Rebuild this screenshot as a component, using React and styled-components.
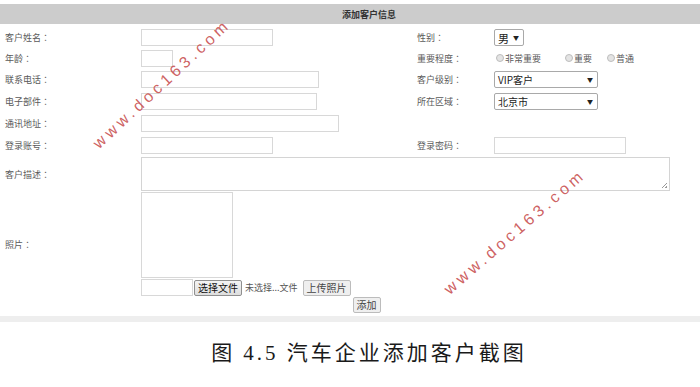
import React from 'react'
import styled, { createGlobalStyle } from 'styled-components'

const GlobalStyle = createGlobalStyle`
  body {
    margin: 0;
    background: #ffffff;
    font-family: "Noto Sans CJK SC", "Noto Sans", sans-serif;
  }
`

const Page = styled.div`
  position: relative;
  width: 700px;
  height: 387px;
  overflow: hidden;
  padding-top: 4px;
  box-sizing: border-box;
`

const Header = styled.div`
  height: 20px;
  background: #cccccc;
  display: flex;
  align-items: center;
  justify-content: center;
  padding-left: 38px;
  font-size: 9px;
  font-weight: 700;
  color: #333;
  margin-bottom: 3px;
`

const Row = styled.div`
  display: grid;
  grid-template-columns: 141px 276px 77px 1fr;
  align-items: center;
  height: ${({ h }) => h}px;
`

const Label = styled.div`
  padding-left: ${({ side }) => (side ? 0 : 5)}px;
  font-size: 9px;
  color: #5a5a5a;
  white-space: nowrap;
`

// full-width colon, centred in its cell like the original page font
const Colon = styled.span`
  font-family: "Noto Sans CJK TC", "Noto Sans CJK SC", sans-serif;
`

const TextInput = styled.div`
  width: ${({ w }) => w}px;
  height: 17px;
  box-sizing: border-box;
  border: 1px solid #d8d8d8;
  background: #fff;
`

const Select = styled.div`
  width: ${({ w }) => w}px;
  height: 17px;
  box-sizing: border-box;
  border: 1px solid #a9a9a9;
  border-radius: 2px;
  display: flex;
  align-items: center;
  justify-content: space-between;
  padding: 0 4px 0 3px;
  font-size: ${({ fs }) => fs || 10}px;
  color: #222;
  background: #fff;
  &::after {
    content: "▼";
    font-size: 6px;
    color: #222;
  }
`

const Radios = styled.div`
  display: flex;
  align-items: center;
  padding-left: 2px;
`

const Radio = styled.label`
  display: flex;
  align-items: center;
  gap: 1px;
  width: ${({ w }) => w}px;
  font-size: 9px;
  color: #5a5a5a;
  white-space: nowrap;
  &::before {
    content: "";
    width: 6px;
    height: 6px;
    border-radius: 50%;
    border: 1px solid #bdbdbd;
    background: #e4e4e4;
  }
`

const TextArea = styled.div`
  position: relative;
  width: 529px;
  height: 34px;
  box-sizing: border-box;
  border: 1px solid #d4d4d4;
  grid-column: 2 / 5;
  &::after {
    content: "";
    position: absolute;
    right: 2px;
    bottom: 2px;
    width: 5px;
    height: 5px;
    background: linear-gradient(135deg, transparent 45%, #999 45%, #999 55%, transparent 55%, transparent 75%, #999 75%);
  }
`

const PhotoCell = styled.div`
  grid-column: 2 / 5;
  display: flex;
  flex-direction: column;
  gap: 1px;
`

const PhotoBox = styled.div`
  width: 92px;
  height: 86px;
  box-sizing: border-box;
  border: 1px solid #d8d8d8;
`

const FileRow = styled.div`
  display: flex;
  align-items: center;
  height: 17px;
`

const Button = styled.div`
  height: ${({ h }) => h || 16}px;
  box-sizing: border-box;
  padding: 0 3px;
  display: flex;
  align-items: center;
  font-size: 10px;
  color: ${({ dark }) => (dark ? '#111' : '#444')};
  border: 1px solid ${({ dark }) => (dark ? '#8f8f8f' : '#bcbcbc')};
  border-radius: 2px;
  background: ${({ dark }) => (dark ? 'linear-gradient(#f4f4f4, #dedede)' : '#efefef')};
  white-space: nowrap;
  margin-left: ${({ ml }) => ml || 0}px;
`

const FileText = styled.span`
  font-size: 9px;
  color: #555;
  margin-left: 3px;
  white-space: nowrap;
`

const ActionRow = styled.div`
  display: flex;
  justify-content: center;
  padding-left: 33px;
  height: 17px;
  align-items: center;
`

const BottomBar = styled.div`
  height: 6px;
  background: #eeeeee;
  margin-top: 3px;
`

const Caption = styled.div`
  display: flex;
  justify-content: center;
  padding-left: 38px;
  margin-top: 14px;
  font-family: "Liberation Serif", "Noto Sans CJK SC", serif;
  font-size: 21px;
  letter-spacing: 3px;
  color: #1a1a1a;
  white-space: pre;
`

const Watermark = styled.div`
  position: absolute;
  left: ${({ x }) => x}px;
  top: ${({ y }) => y}px;
  transform: translate(-50%, -50%) rotate(${({ angle }) => angle}deg);
  font-family: "Liberation Sans", Arial, sans-serif;
  font-size: 16px;
  letter-spacing: 4px;
  color: rgba(200, 80, 80, 0.9);
  white-space: nowrap;
  pointer-events: none;
`

const FieldLabel = ({ children, side }) => (
  <Label side={side}>
    {children}
    <Colon>：</Colon>
  </Label>
)

export default function App() {
  return (
    <Page>
      <GlobalStyle />
      <Header>添加客户信息</Header>

      <Row h={21}>
        <FieldLabel>客户姓名</FieldLabel>
        <TextInput w={132} />
        <FieldLabel side>性别</FieldLabel>
        <Select w={30} fs={11}>男</Select>
      </Row>
      <Row h={20}>
        <FieldLabel>年龄</FieldLabel>
        <TextInput w={32} />
        <FieldLabel side>重要程度</FieldLabel>
        <Radios>
          <Radio w={69}>非常重要</Radio>
          <Radio w={42}>重要</Radio>
          <Radio w={40}>普通</Radio>
        </Radios>
      </Row>
      <Row h={22}>
        <FieldLabel>联系电话</FieldLabel>
        <TextInput w={178} />
        <FieldLabel side>客户级别</FieldLabel>
        <Select w={104}>VIP客户</Select>
      </Row>
      <Row h={22}>
        <FieldLabel>电子部件</FieldLabel>
        <TextInput w={176} />
        <FieldLabel side>所在区域</FieldLabel>
        <Select w={104}>北京市</Select>
      </Row>
      <Row h={23}>
        <FieldLabel>通讯地址</FieldLabel>
        <TextInput w={198} />
      </Row>
      <Row h={21}>
        <FieldLabel>登录账号</FieldLabel>
        <TextInput w={132} />
        <FieldLabel side>登录密码</FieldLabel>
        <TextInput w={132} />
      </Row>
      <Row h={36}>
        <FieldLabel>客户描述</FieldLabel>
        <TextArea />
      </Row>
      <Row h={104}>
        <FieldLabel>照片</FieldLabel>
        <PhotoCell>
          <PhotoBox />
          <FileRow>
            <TextInput w={52} />
            <Button dark ml={1}>选择文件</Button>
            <FileText>未选择...文件</FileText>
            <Button ml={5}>上传照片</Button>
          </FileRow>
        </PhotoCell>
      </Row>
      <ActionRow>
        <Button h={16}>添加</Button>
      </ActionRow>
      <BottomBar />
      <Caption>图 4.5 汽车企业添加客户截图</Caption>

      <Watermark x={162} y={84} angle={-43}>www.doc163.com</Watermark>
      <Watermark x={515} y={232} angle={-41}>www.doc163.com</Watermark>
    </Page>
  )
}
